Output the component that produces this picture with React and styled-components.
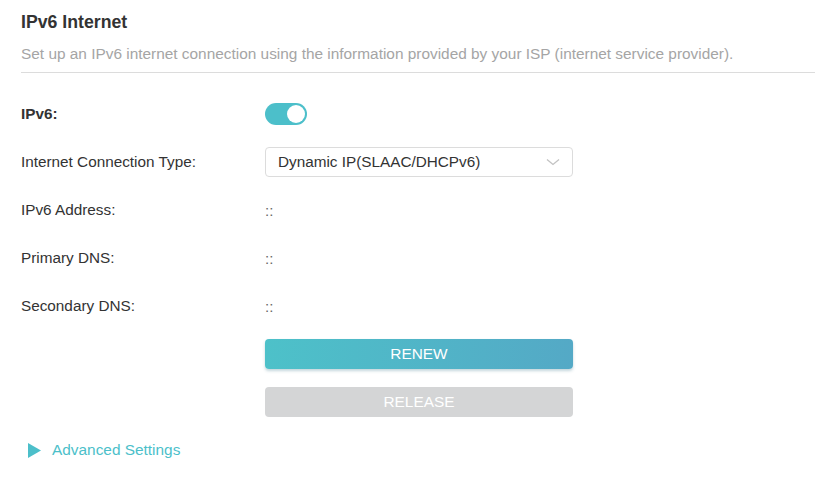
import styled, { createGlobalStyle } from "styled-components";

const GlobalStyle = createGlobalStyle`
  html, body {
    margin: 0;
    padding: 0;
    background: #fff;
  }
  body {
    font-family: "Liberation Sans", Arial, sans-serif;
    color: #333;
  }
`;

const Page = styled.div`
  width: 815px;
  height: 486px;
  box-sizing: border-box;
  padding-left: 21px;
  overflow: hidden;
`;

const Header = styled.div`
  border-bottom: 1px solid #dcdcdc;
  padding: 11px 0 9px;
`;

const Title = styled.h2`
  margin: 0;
  font-size: 17.7px;
  line-height: 22px;
  font-weight: bold;
  color: #333;
`;

const Subtitle = styled.p`
  margin: 12px 0 0;
  font-size: 15.4px;
  line-height: 18px;
  color: #a5a5a5;
`;

const Form = styled.div`
  padding-top: 17px;
`;

const Row = styled.div`
  display: flex;
  align-items: center;
  height: 48px;
`;

const Label = styled.div`
  width: 244px;
  flex-shrink: 0;
  font-size: 15.3px;
  font-weight: ${(p) => (p.$bold ? "bold" : "normal")};
  color: #333;
`;

const Value = styled.div`
  font-size: 15px;
  color: #666;
`;

const Toggle = styled.div`
  width: 42px;
  height: 22px;
  border-radius: 11px;
  background: #4cbfca;
  position: relative;
  &::after {
    content: "";
    position: absolute;
    top: 2px;
    right: 2px;
    width: 18px;
    height: 18px;
    border-radius: 50%;
    background: #fff;
  }
`;

const Select = styled.div`
  width: 308px;
  height: 30px;
  box-sizing: border-box;
  border: 1px solid #dcdcdc;
  border-radius: 4px;
  display: flex;
  align-items: center;
  justify-content: space-between;
  padding: 0 12px 0 12px;
  font-size: 15.3px;
  color: #333;
`;

const Button = styled.button`
  width: 308px;
  height: 30px;
  border: none;
  border-radius: 4px;
  font-family: "Liberation Sans", Arial, sans-serif;
  font-size: 15.4px;
  color: #fff;
  cursor: pointer;
  background: ${(p) =>
    p.$primary ? "linear-gradient(90deg, #4dc1c9 0%, #54a9c6 100%)" : "#d4d5d6"};
  box-shadow: ${(p) => (p.$primary ? "0 2px 3px rgba(60, 120, 140, 0.3)" : "none")};
`;

const Spacer = styled.div`
  width: 244px;
  flex-shrink: 0;
`;

const Advanced = styled.div`
  display: flex;
  align-items: center;
  gap: 11px;
  height: 48px;
  padding-left: 7px;
  font-size: 15.4px;
  color: #4cbfca;
  cursor: pointer;
`;

const Chevron = () => (
  <svg width="14" height="8" viewBox="0 0 14 8" fill="none">
    <path d="M1 1.5 L7 6.5 L13 1.5" stroke="#c2c2c2" strokeWidth="1.3" />
  </svg>
);

const Triangle = () => (
  <svg width="13" height="15" viewBox="0 0 13 15">
    <path d="M0 0 L13 7.5 L0 15 Z" fill="#4cbfca" />
  </svg>
);

export default function App() {
  const infoRows = [
    { label: "IPv6 Address:", value: "::" },
    { label: "Primary DNS:", value: "::" },
    { label: "Secondary DNS:", value: "::" },
  ];

  return (
    <Page>
      <GlobalStyle />
      <Header>
        <Title>IPv6 Internet</Title>
        <Subtitle>
          Set up an IPv6 internet connection using the information provided by your ISP
          (internet service provider).
        </Subtitle>
      </Header>
      <Form>
        <Row>
          <Label $bold>IPv6:</Label>
          <Toggle />
        </Row>
        <Row>
          <Label>Internet Connection Type:</Label>
          <Select>
            <span>Dynamic IP(SLAAC/DHCPv6)</span>
            <Chevron />
          </Select>
        </Row>
        {infoRows.map((r) => (
          <Row key={r.label}>
            <Label>{r.label}</Label>
            <Value>{r.value}</Value>
          </Row>
        ))}
        <Row>
          <Spacer />
          <Button $primary>RENEW</Button>
        </Row>
        <Row>
          <Spacer />
          <Button>RELEASE</Button>
        </Row>
        <Advanced>
          <Triangle />
          Advanced Settings
        </Advanced>
      </Form>
    </Page>
  );
}
